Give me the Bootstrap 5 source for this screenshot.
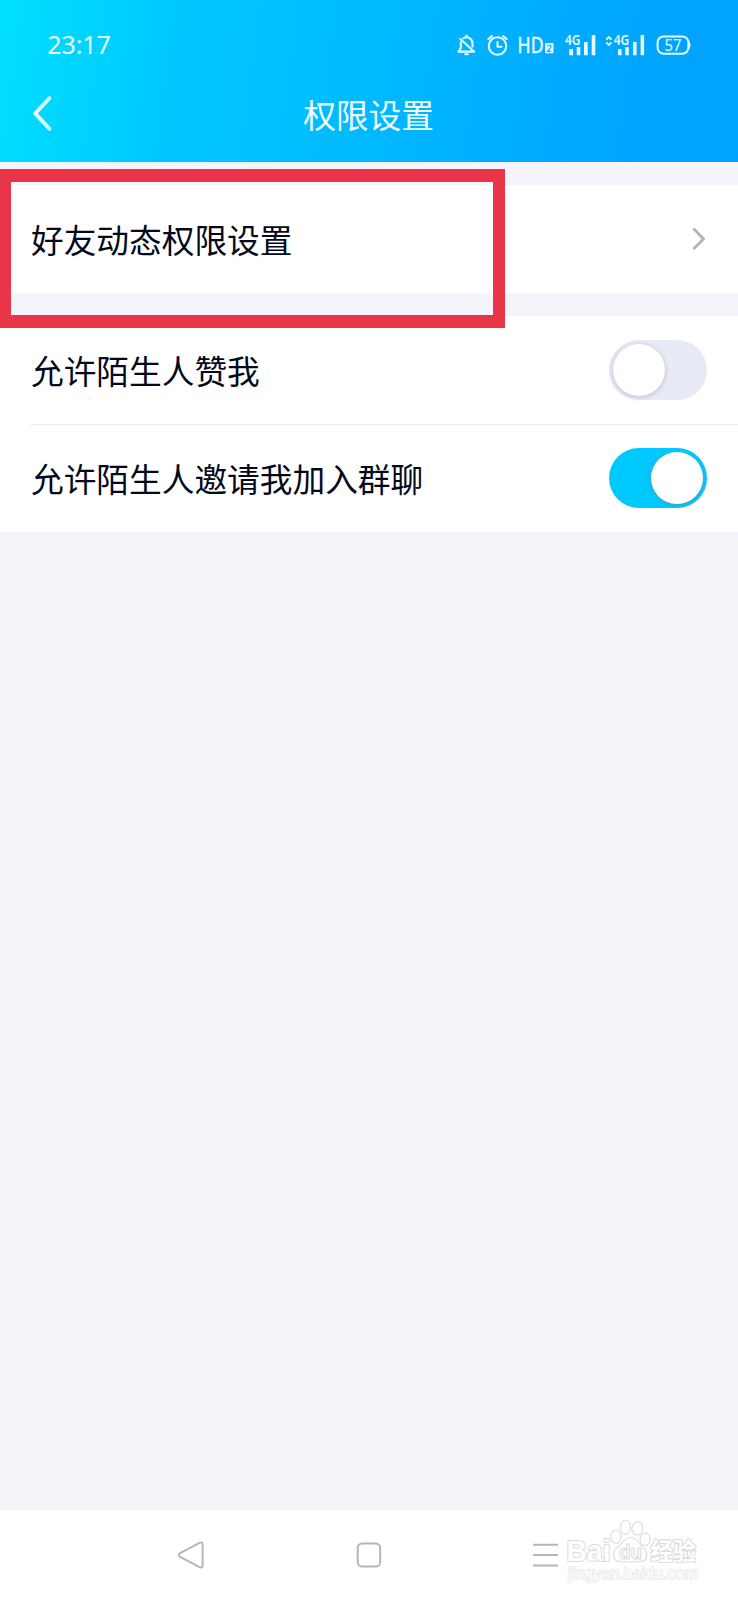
<!DOCTYPE html>
<html lang="zh-CN">
<head>
<meta charset="utf-8">
<meta name="viewport" content="width=device-width, initial-scale=1">
<title>权限设置</title>
<link href="https://cdn.jsdelivr.net/npm/bootstrap@5.3.0/dist/css/bootstrap.min.css" rel="stylesheet">
<style>
body{font-family:"Noto Sans CJK SC",sans-serif;font-size:32.7px;line-height:1.5;color:#03081a;background:#f3f5fa}
svg{display:block}
.screen{width:738px;height:1600px}
.topbar{height:162px;background:linear-gradient(98deg,#00dfff 0%,#00c8ff 24%,#00b7ff 55%,#00a5ff 85%,#00a2ff 100%);color:#f0fdff}
.statusline{height:68px}
.titleline{height:94px;padding:0 32px 0 31px}
.page-title{font-size:32.7px;font-weight:400;position:relative;top:-1px}
.side{width:60px}
.group-gap{margin-top:23px}
.setting{height:108px;padding:0 31px 0 31px;background:#fff;border:0;color:inherit}
.setting.last{height:107px;padding-bottom:1px}
.split{height:1px;margin-left:30px;background:#ebecf0}
.form-switch.toggle{padding:0;margin:0;min-height:0}
.toggle .form-check-input{width:98px;height:60px;margin:0;float:none;display:block;border:0;border-radius:30px;background:#e8ebf5;position:relative;opacity:1}
.toggle .form-check-input:checked{background:#00c9ff}
.toggle .form-check-input::after{content:"";position:absolute;left:4px;top:4px;width:52px;height:52px;border-radius:50%;background:#fff;box-shadow:0 1px 5px rgba(70,80,120,.3)}
.toggle .form-check-input:checked::after{left:42px;box-shadow:0 1px 5px rgba(100,140,160,.7)}
.highlight{position:absolute;left:0;top:169px;width:505px;height:159px;border:solid #ea3548;border-width:13px 12px 13px 11px;pointer-events:none}
.sysnav{height:90px;background:#fff}
</style>
</head>
<body>
<main class="screen d-flex flex-column position-relative overflow-hidden">
  <header class="topbar">
    <div class="statusline">
      <svg width="738" height="68" viewBox="0 0 738 68" fill="none" stroke="#e6fbff" font-family="Noto Sans, sans-serif">
        <text x="47.3" y="54" font-size="25" textLength="63.5" stroke="none" fill="#e6fbff">23:17</text>
        <!-- muted bell -->
        <g stroke-width="2.1" stroke-linecap="round" stroke-linejoin="round">
          <path d="M463.5 38.2q3-2 6 0q3 1.8 3 5.3v3M460.8 42.5v5.5l-2.2 3.6h14.5M466.5 35.5v1.2M465.3 54.2h2.6M460.3 39l14 12.8"/>
          <!-- alarm -->
          <circle cx="497.5" cy="46" r="8.7"/>
          <path d="M497.5 42v4.7h4M488.3 39l3.6-2.8M506.7 39l-3.6-2.8"/>
        </g>
        <text x="517.6" y="53" font-size="22.4" textLength="26" lengthAdjust="spacingAndGlyphs" stroke="#e6fbff" stroke-width=".5" fill="#e6fbff">HD</text>
        <rect x="545" y="43" width="8.5" height="10.3" rx="1" fill="#e6fbff" stroke="none"/>
        <path d="M547.4 46.2q.2-1.2 1.8-1.2 1.8 0 1.8 1.5 0 1-1.2 2.2l-2.3 2.6h3.8" stroke="#00a9ff" stroke-width="1.2"/>
        <!-- mobile signals -->
        <g fill="#e6fbff" stroke="none">
          <text x="565" y="45" font-size="14" font-weight="600" textLength="15.5" lengthAdjust="spacingAndGlyphs">4G</text>
          <path d="M569.3 49h3.7v6.2h-3.7zM576.7 47h3.6v8.2h-3.6zM584 42h3.7v13.2H584zM591.7 35h3.6v20.2h-3.6z"/>
          <text x="613.7" y="45" font-size="14" font-weight="600" textLength="15.5" lengthAdjust="spacingAndGlyphs">4G</text>
          <path d="M618 49h3.6v6.2H618zM625.3 47h3.5v8.2h-3.5zM633 42h3.6v13.2H633zM640.6 35h3.5v20.2h-3.5z"/>
        </g>
        <path d="M606.3 39.6l2.6-2.6 2.6 2.6M606.3 42.3l2.6 2.6 2.6-2.6" stroke-width="1.8"/>
        <!-- battery -->
        <rect x="657.6" y="36.5" width="30.8" height="17.3" rx="6" stroke-width="2"/>
        <path d="M689 41.5q2.4 3.6 0 7.2z" fill="#e6fbff" stroke-width=".8"/>
        <text x="664.4" y="50.6" font-size="15.8" textLength="17" lengthAdjust="spacingAndGlyphs" stroke="none" fill="#e6fbff">57</text>
      </svg>
    </div>
    <div class="titleline d-flex align-items-center justify-content-between">
      <div class="side"><svg width="24" height="40" viewBox="0 0 24 40" fill="none" stroke="#e6fbff" stroke-width="3.8" stroke-linecap="round" stroke-linejoin="round"><path d="M18.4 3.2L4.2 18.4l14.2 15.4"/></svg></div>
      <h1 class="page-title m-0">权限设置</h1>
      <div class="side"></div>
    </div>
  </header>
  <section class="group-gap">
    <a class="setting d-flex align-items-center justify-content-between text-decoration-none" href="#">
      <span>好友动态权限设置</span>
      <svg width="16" height="24" viewBox="0 0 16 24" fill="none" stroke="#b1b2c0" stroke-width="2.8" stroke-linecap="round" stroke-linejoin="round"><path d="M3.2 2.3l9.4 9.6-9.4 9.4"/></svg>
    </a>
  </section>
  <section class="group-gap bg-white">
    <div class="setting d-flex align-items-center justify-content-between">
      <label for="likes">允许陌生人赞我</label>
      <div class="form-check form-switch toggle"><input class="form-check-input" type="checkbox" role="switch" id="likes"></div>
    </div>
    <div class="split"></div>
    <div class="setting last d-flex align-items-center justify-content-between">
      <label for="groups">允许陌生人邀请我加入群聊</label>
      <div class="form-check form-switch toggle"><input class="form-check-input" type="checkbox" role="switch" id="groups" checked></div>
    </div>
  </section>
  <footer class="sysnav mt-auto">
    <svg width="738" height="90" viewBox="0 0 738 90" fill="none" stroke="#b6b6b6" stroke-width="2" stroke-linejoin="round">
      <path d="M180.2 43.2L199.5 32.8Q202.6 31.4 202.6 34.6V55.4Q202.6 58.6 199.5 57.2L180.2 46.8Q177.2 45 180.2 43.2Z"/>
      <rect x="357.7" y="33.5" width="22.5" height="23" rx="4.5"/>
      <path d="M533 34.8h25M533 45.1h25M533 55.5h25"/>
      <!-- watermark -->
      <g stroke="#dcdcdc" stroke-width="1.1" fill="#fff" transform="translate(0 -10)">
        <g font-family="Liberation Sans, sans-serif" font-weight="700" stroke-width="2.2" paint-order="stroke">
          <text x="566.5" y="61" font-size="30" textLength="44" lengthAdjust="spacingAndGlyphs">Bai</text>
          <text x="650.5" y="60" font-size="23.5" textLength="45.5" lengthAdjust="spacingAndGlyphs" font-family="Noto Sans CJK SC, sans-serif">经验</text>
        </g>
        <ellipse cx="616" cy="36.5" rx="5" ry="6.8"/>
        <ellipse cx="625.5" cy="27.3" rx="5" ry="7"/>
        <ellipse cx="637.3" cy="28.4" rx="5.3" ry="6.8" transform="rotate(12 637.3 28.4)"/>
        <ellipse cx="645" cy="39.2" rx="5" ry="6.5"/>
        <path d="M630.5 37.5C624 37.5 622 44 617 48C612 52 612 61 620 61.7H640C649 61 648 51.5 643 47.5C638 43 637 37.5 630.5 37.5Z"/>
        <text x="619" y="58.5" font-size="20" font-family="Liberation Sans, sans-serif" font-weight="700" textLength="23" lengthAdjust="spacingAndGlyphs">du</text>
        <text x="568" y="79.3" font-size="17" stroke-width="1.4" paint-order="stroke" stroke="#e2e2e2" font-family="Liberation Sans, sans-serif" textLength="130" lengthAdjust="spacingAndGlyphs">jingyan.baidu.com</text>
      </g>
    </svg>
  </footer>
  <div class="highlight"></div>
</main>
<script src="https://cdn.jsdelivr.net/npm/bootstrap@5.3.0/dist/js/bootstrap.bundle.min.js"></script>
</body>
</html>
